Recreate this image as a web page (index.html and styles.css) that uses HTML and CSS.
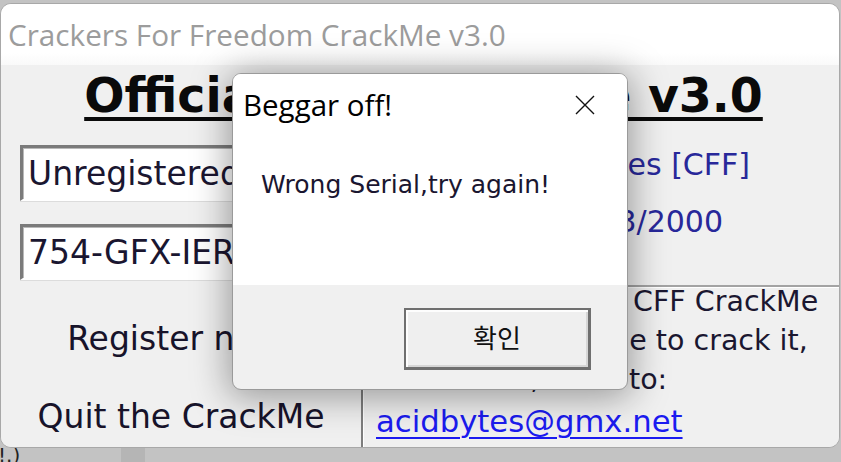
FILE: index.html
```html
<!DOCTYPE html>
<html lang="en">
<head>
<meta charset="utf-8">
<title>Crackers For Freedom CrackMe v3.0</title>
<link rel="stylesheet" href="styles.css">
</head>
<body>
<div class="desk">
  <div class="window">
    <div class="titlebar">Crackers For Freedom CrackMe v3.0</div>
    <div class="client">
      <h1 class="heading">Official CFF CrackMe v3.0</h1>
      <div class="main">
        <div class="fields">
          <div class="field">Unregistered</div>
          <div class="field">754-GFX-IER-1176</div>
        </div>
        <div class="info">
          <div class="info-line by">by acidbytes [CFF]</div>
          <div class="info-line date">Date: 15/03/2000</div>
        </div>
        <div class="actions">
          <div class="action">Register now!</div>
          <div class="action">Quit the CrackMe</div>
        </div>
        <div class="about">
          <div class="about-line">Here you find the CFF CrackMe</div>
          <div class="about-line">The final challenge to crack it,</div>
          <div class="about-line">mail Name,Serial to:</div>
          <div class="about-line link-line"><a class="mail" href="#">acidbytes@gmx.net</a></div>
        </div>
      </div>
      <div class="msgbox">
        <div class="msg-body">
          <div class="msg-head">
            <span class="msg-title">Beggar off!</span>
            <svg class="msg-close" width="20" height="20" viewBox="0 0 20 20" aria-hidden="true">
              <path d="M1 1 L19 19 M19 1 L1 19" stroke="#111" stroke-width="1.4" fill="none"/>
            </svg>
          </div>
          <div class="msg-text">Wrong Serial,try again!</div>
        </div>
        <div class="msg-foot">
          <div class="msg-button">확인</div>
        </div>
      </div>
    </div>
  </div>
  <div class="tray"><span class="tray-text">!.)</span><span class="tray-patch"></span></div>
</div>
</body>
</html>
```

FILE: styles.css
```css
html, body {
  margin: 0;
  padding: 0;
}
body {
  background: #c3c3c3;
  width: 841px;
  height: 462px;
  overflow: hidden;
}
.desk {
  padding-top: 3px;
}
.window {
  position: relative;
  width: 838px;
  height: 443px;
  border: 1px solid #a8a8a8;
  border-radius: 11px;
  overflow: hidden;
  background: #f0f0f0;
}
.titlebar {
  height: 61px;
  line-height: 61px;
  background: linear-gradient(#ffffff 80%, #f9f9f9);
  padding-left: 7px;
  font-family: "Open Sans", sans-serif;
  font-size: 29.7px;
  color: #9c9c9c;
  white-space: nowrap;
}
.client {
  height: 382px;
  background: #f0f0f0;
  font-family: "DejaVu Sans", Verdana, sans-serif;
  font-size: 31px;
  color: #16162c;
}
.heading {
  margin: 0;
  padding: 3px 0 6px 7px;
  height: 56px;
  line-height: 56px;
  text-align: center;
  font-family: "DejaVu Sans", Verdana, sans-serif;
  font-weight: bold;
  font-size: 47.4px;
  color: #0a0a0a;
  text-decoration: underline;
  text-decoration-thickness: 4px;
  text-underline-offset: 5px;
  white-space: nowrap;
}
.main {
  display: grid;
  grid-template-columns: 360px minmax(0, 1fr);
  grid-template-rows: 155px minmax(0, 1fr);
  height: 317px;
}
.fields {
  display: flex;
  flex-direction: column;
  gap: 23px;
  padding: 15px 0 0 19px;
}
.field {
  width: 312px;
  height: 51px;
  line-height: 51px;
  padding-left: 5px;
  font-size: 33px;
  background: #ffffff;
  border-style: solid;
  border-width: 3px 2px 2px 3px;
  border-color: #7b7b7b #ffffff #ffffff #7b7b7b;
  box-shadow: inset 1px 1px 0 #b9b9b9, 0 1px 0 #dcdcdc;
  white-space: nowrap;
  overflow: hidden;
  color: #1a1630;
}
.info {
  padding-top: 6px;
  font-size: 30px;
  color: #28289a;
}
.info-line {
  line-height: 57px;
  text-align: right;
  white-space: nowrap;
}
.info-line.by {
  padding-right: 89px;
}
.info-line.date {
  padding-right: 116px;
}
.actions {
  display: flex;
  flex-direction: column;
  align-items: center;
  padding-top: 34px;
  gap: 38px;
  font-size: 33px;
}
.action {
  line-height: 40px;
  color: #17132a;
  white-space: nowrap;
}
.about {
  border-top: 2px solid #a3a3a3;
  border-left: 2px solid #7e7e7e;
  box-shadow: inset 1px 1px 0 #ffffff;
  padding-left: 13px;
  font-size: 28.5px;
  color: #1b1730;
  overflow: hidden;
}
.about-line {
  line-height: 39px;
  white-space: nowrap;
}
.about-line:first-child {
  margin-top: -5px;
}
.link-line {
  font-size: 30.7px;
  line-height: 45px;
}
.mail {
  color: #1b1bf0;
  text-decoration: underline;
  text-decoration-thickness: 2px;
  text-underline-offset: 5px;
}
.msgbox {
  position: absolute;
  left: 231px;
  top: 69px;
  width: 394px;
  height: 315px;
  border: 1px solid #9a9a9a;
  border-radius: 9px;
  overflow: hidden;
  background: #f0f0f0;
  box-shadow: 0 4px 36px 4px rgba(0, 0, 0, 0.36);
  display: flex;
  flex-direction: column;
}
.msg-body {
  height: 211px;
  background: #ffffff;
}
.msg-head {
  display: flex;
  justify-content: space-between;
  align-items: flex-start;
  padding: 9px 32px 0 10px;
}
.msg-title {
  font-family: "Open Sans", sans-serif;
  font-size: 29.5px;
  line-height: 44px;
  color: #000000;
}
.msg-close {
  margin-top: 12px;
}
.msg-text {
  padding: 38px 0 0 28px;
  font-family: "DejaVu Sans", Verdana, sans-serif;
  font-size: 25px;
  line-height: 40px;
  color: #1a1630;
}
.msg-foot {
  flex: 1;
  display: flex;
  justify-content: flex-end;
  align-items: flex-start;
  padding: 23px 36px 0 0;
}
.msg-button {
  width: 182px;
  height: 53px;
  border-style: solid;
  border-width: 2px 3px 3px 2px;
  border-color: #6f6f6f;
  box-shadow: inset 2px 2px 0 #fdfdfd, inset -2px -2px 0 #d6d6d6;
  background: #efefef;
  display: flex;
  justify-content: center;
  align-items: center;
  font-family: "Noto Sans CJK KR", sans-serif;
  font-size: 26px;
  color: #111111;
  padding-bottom: 4px;
  box-sizing: content-box;
}
.tray {
  display: flex;
  align-items: center;
  height: 14px;
}
.tray-text {
  font-family: "DejaVu Sans", sans-serif;
  font-size: 20px;
  line-height: 14px;
  color: #222;
  margin-left: -2px;
}
.tray-patch {
  width: 24px;
  height: 14px;
  margin-left: 101px;
  background: #b5b5b5;
}
```
